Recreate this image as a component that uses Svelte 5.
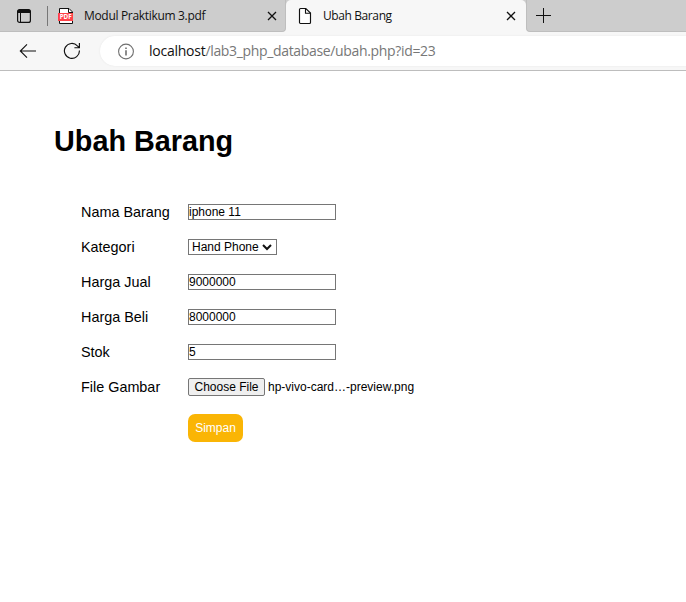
<script>
  let name = $state('iphone 11');
  let sell = $state('9000000');
  let buy = $state('8000000');
  let stock = $state('5');
</script>

<div class="window">
  <div class="tabs">
    <div class="left">
      <svg class="tabicon" width="16" height="16" viewBox="0 0 16 16">
        <rect x="1.6" y="1.6" width="12.8" height="12.8" rx="2" fill="none" stroke="#111" stroke-width="1.2" />
        <path d="M1.5 5V3.5a2 2 0 0 1 2-2h9a2 2 0 0 1 2 2V5z" fill="#111" />
        <path d="M4.5 5v9" stroke="#111" />
      </svg>
      <span class="sep"></span>
      <svg class="pdf" width="16" height="18" viewBox="0 0 16 18">
        <path d="M1.5 1.5H11L14.5 5V16.5H1.5z" fill="#fff" stroke="#111" />
        <path d="M10.5 1.5V5.5H14.5" fill="none" stroke="#111" />
        <rect x="0" y="6" width="15" height="8" fill="#ff4148" />
        <text x="1.7" y="12.4" font-size="6.3" font-weight="bold" fill="#fff" textLength="12" lengthAdjust="spacingAndGlyphs">PDF</text>
      </svg>
      <span class="title first">Modul Praktikum 3.pdf</span>
      <svg class="close" width="10" height="10" viewBox="0 0 10 10"><path d="M1 1L9 9M9 1L1 9" stroke="#111" stroke-width="1.3" /></svg>
    </div>
    <div class="active">
      <svg class="doc" width="14" height="18" viewBox="0 0 14 18">
        <path d="M2.5 1.5H7.8L12.5 6V15.5a1 1 0 0 1-1 1h-9a1 1 0 0 1-1-1V2.5a1 1 0 0 1 1-1z" fill="#fff" stroke="#111" stroke-width="1.15" />
        <path d="M7.5 1.5V6.3H12.5" fill="none" stroke="#111" stroke-width="1.1" />
      </svg>
      <span class="title second">Ubah Barang</span>
      <svg class="close" width="10" height="10" viewBox="0 0 10 10"><path d="M1 1L9 9M9 1L1 9" stroke="#111" stroke-width="1.3" /></svg>
    </div>
    <div class="rest">
      <svg width="15" height="15" viewBox="0 0 15 15"><path d="M0 7.5H15M7.5 0V15" stroke="#111" /></svg>
    </div>
  </div>

  <div class="toolbar">
    <svg class="back" width="18" height="16" viewBox="0 0 18 16"><path d="M17 8H1.5M8 1.3L1.3 8L8 14.7" fill="none" stroke="#111" stroke-width="1.1" /></svg>
    <svg class="reload" width="18" height="18" viewBox="0 0 18 18"><path d="M16.4 8.5A7.5 7.5 0 1 1 14.4 3.8L16 5.4M16.4 1V5.7H11.4" fill="none" stroke="#111" stroke-width="1.15" /></svg>
    <div class="address">
      <svg width="17" height="17" viewBox="0 0 17 17"><circle cx="8" cy="8.5" r="7.4" fill="none" stroke="#707070" stroke-width="1.1" /><path d="M8 7.2V12.5M8 4.4V6" stroke="#707070" stroke-width="1.6" /></svg>
      <span class="url"><b>localhost</b>/lab3_php_database/ubah.php?id=23</span>
    </div>
  </div>

  <main>
    <h1>Ubah Barang</h1>
    <form onsubmit={(e) => e.preventDefault()}>
      <div class="row"><label for="nama">Nama Barang</label><input id="nama" bind:value={name} /></div>
      <div class="row">
        <label for="kategori">Kategori</label>
        <button type="button" id="kategori" class="select">
          <span>Hand Phone</span>
          <svg width="10" height="8" viewBox="0 0 10 8"><path d="M1 2L5 6L9 2" fill="none" stroke="#111" stroke-width="2" /></svg>
        </button>
      </div>
      <div class="row"><label for="jual">Harga Jual</label><input id="jual" bind:value={sell} /></div>
      <div class="row"><label for="beli">Harga Beli</label><input id="beli" bind:value={buy} /></div>
      <div class="row"><label for="stok">Stok</label><input id="stok" bind:value={stock} /></div>
      <div class="row">
        <label for="file">File Gambar</label>
        <button type="button" id="file" class="choose">Choose File</button>
        <span class="filename">hp-vivo-card…-preview.png</span>
      </div>
      <button class="save">Simpan</button>
    </form>
  </main>
</div>

<style>
  :global(body) { margin: 0; background: #fff; }
  * { box-sizing: border-box; }
  svg { display: block; flex: none; }
  .window { width: 686px; height: 602px; overflow: hidden; background: #fff; font-family: "Liberation Sans", Arial, sans-serif; color: #000; }
  .tabs { display: flex; height: 32px; background: #f7f7f7; }
  .left { display: flex; align-items: center; width: 286px; background: #cdcdcd; border-bottom: 1px solid #bebebe; border-right: 1px solid #bebebe; border-bottom-right-radius: 4px; }
  .active { display: flex; align-items: center; width: 240px; padding-bottom: 1px; background: #f7f7f7; border-radius: 5px 5px 0 0; box-shadow: 0 -5px 0 #cdcdcd; }
  .rest { flex: 1; background: #cdcdcd; border-bottom: 1px solid #bebebe; border-left: 1px solid #bebebe; border-bottom-left-radius: 4px; padding: 8px 0 0 9px; }
  .tabicon { margin-left: 16px; }
  .sep { width: 1px; height: 20px; margin: 1px 10px 0 15px; background: #777; }
  .pdf { font-family: "Open Sans", sans-serif; }
  .title { font: 12px/16px "Open Sans", "Noto Sans", sans-serif; white-space: nowrap; color: #111; }
  .first { width: 182px; margin-left: 10px; letter-spacing: -0.32px; }
  .second { width: 182px; margin-left: 11px; letter-spacing: -0.4px; }
  .close { margin-top: 1px; margin-left: 0.5px; }
  .doc { margin-left: 12px; }
  .toolbar { display: flex; align-items: center; height: 39px; background: #f7f7f7; border-bottom: 1px solid #bdbdbd; }
  .back { margin-left: 19px; }
  .reload { margin-left: 26px; }
  .address { display: flex; align-items: center; flex: 1; height: 30px; margin-left: 19px; padding-left: 18px; border-radius: 15px 0 0 15px; background: #fff; box-shadow: 0 0 2px #e5e5e5; }
  .url { margin-left: 14px; font: 14px/20px "Open Sans", "Noto Sans", sans-serif; letter-spacing: -0.34px; white-space: nowrap; color: #777; }
  .url b { font-weight: 400; color: #111; letter-spacing: -0.25px; }
  main { padding: 53px 0 0 54px; }
  h1 { margin: 0; font-size: 28.8px; line-height: 34px; font-weight: 700; }
  form { padding: 36px 0 0 27px; }
  .row { display: flex; align-items: center; height: 35px; }
  label { width: 107px; font-size: 14.4px; line-height: 18px; }
  input { width: 148px; height: 16px; margin: 0; padding: 0; border: 1px solid #767676; border-radius: 0; background: #fff; font: 12px/14px "Liberation Sans", Arial, sans-serif; color: #000; outline: none; }
  button { font: 12px/14px "Liberation Sans", Arial, sans-serif; color: #000; margin: 0; padding: 0; white-space: nowrap; }
  .select { display: flex; align-items: center; width: 89px; height: 16px; padding-left: 3px; border: 1px solid #767676; background: #fff; }
  .select span { width: 70px; text-align: left; }
  .choose { width: 77px; height: 18px; border: 1px solid #767676; border-radius: 2px; background: #efefef; }
  .filename { margin-left: 3px; font-size: 12px; line-height: 14px; white-space: nowrap; }
  .save { display: block; width: 55px; height: 28px; margin: 10px 0 0 107px; border: 0; border-radius: 7px; background: #fab505; color: #fff; }
</style>
